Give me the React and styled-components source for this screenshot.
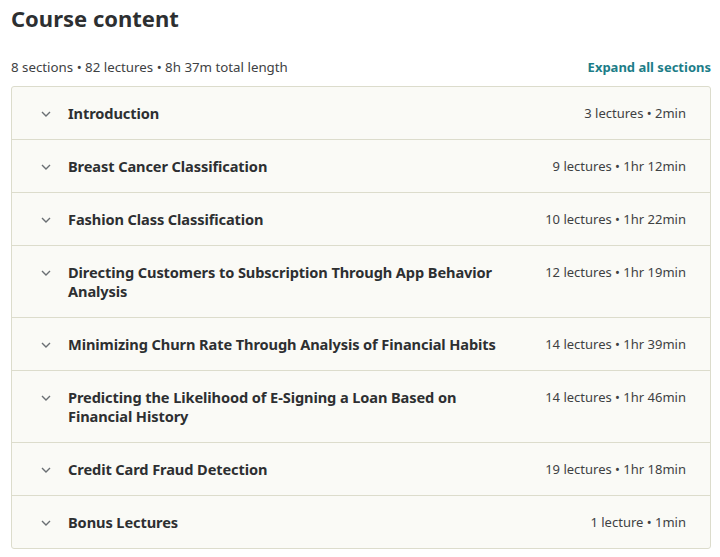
import React from 'react';
import styled, { createGlobalStyle } from 'styled-components';

const GlobalStyle = createGlobalStyle`
  body {
    margin: 0;
    background: #fff;
    font-family: "Noto Sans", "Open Sans", sans-serif;
    color: #2d2f31;
  }
`;

const Page = styled.div`
  padding: 4px 9px 0 11px;
`;

const Title = styled.h2`
  margin: 0;
  font-size: 22px;
  line-height: 28px;
  font-weight: 700;
  color: #2d2f31;
`;

const Summary = styled.div`
  display: flex;
  justify-content: space-between;
  align-items: baseline;
  margin-top: 26px;
  margin-bottom: 10px;
  font-size: 13px;
`;

const Stats = styled.span`
  color: #3e4143;
  font-size: 13.3px;
`;

const ExpandLink = styled.button`
  border: 0;
  background: none;
  padding: 0;
  font: inherit;
  font-weight: 700;
  color: #1c7d88;
  cursor: pointer;
`;

const Sections = styled.div`
  border: 1px solid #dcdccc;
  border-radius: 3px;
  background: #fafaf6;
  overflow: hidden;
`;

const Row = styled.div`
  display: flex;
  align-items: flex-start;
  padding: 17px 24px 16px 28px;
  border-top: ${(p) => (p.first ? '0' : '1px solid #dcdccc')};
`;

const Chevron = styled.span`
  flex: none;
  width: 12px;
  height: 19px;
  margin-right: 16px;
  display: flex;
  align-items: center;
  justify-content: center;
  color: #6a6f73;
`;

const SectionTitle = styled.span`
  flex: 1;
  font-size: 14.6px;
  letter-spacing: -0.1px;
  line-height: 19px;
  font-weight: 700;
  color: #2d2f31;
  padding-right: 24px;
`;

const Meta = styled.span`
  flex: none;
  font-size: 13px;
  line-height: 19px;
  color: #3e4143;
`;

const sections = [
  ['Introduction', '3 lectures • 2min'],
  ['Breast Cancer Classification', '9 lectures • 1hr 12min'],
  ['Fashion Class Classification', '10 lectures • 1hr 22min'],
  ['Directing Customers to Subscription Through App Behavior Analysis', '12 lectures • 1hr 19min'],
  ['Minimizing Churn Rate Through Analysis of Financial Habits', '14 lectures • 1hr 39min'],
  ['Predicting the Likelihood of E-Signing a Loan Based on Financial History', '14 lectures • 1hr 46min'],
  ['Credit Card Fraud Detection', '19 lectures • 1hr 18min'],
  ['Bonus Lectures', '1 lecture • 1min'],
];

function ChevronIcon() {
  return (
    <svg width="10" height="6" viewBox="0 0 10 6" fill="none">
      <path d="M1 1l4 4 4-4" stroke="currentColor" strokeWidth="1.4" />
    </svg>
  );
}

export default function App() {
  return (
    <Page>
      <GlobalStyle />
      <Title>Course content</Title>
      <Summary>
        <Stats>8 sections • 82 lectures • 8h 37m total length</Stats>
        <ExpandLink>Expand all sections</ExpandLink>
      </Summary>
      <Sections>
        {sections.map(([name, meta], i) => (
          <Row key={name} first={i === 0}>
            <Chevron>
              <ChevronIcon />
            </Chevron>
            <SectionTitle>{name}</SectionTitle>
            <Meta>{meta}</Meta>
          </Row>
        ))}
      </Sections>
    </Page>
  );
}
